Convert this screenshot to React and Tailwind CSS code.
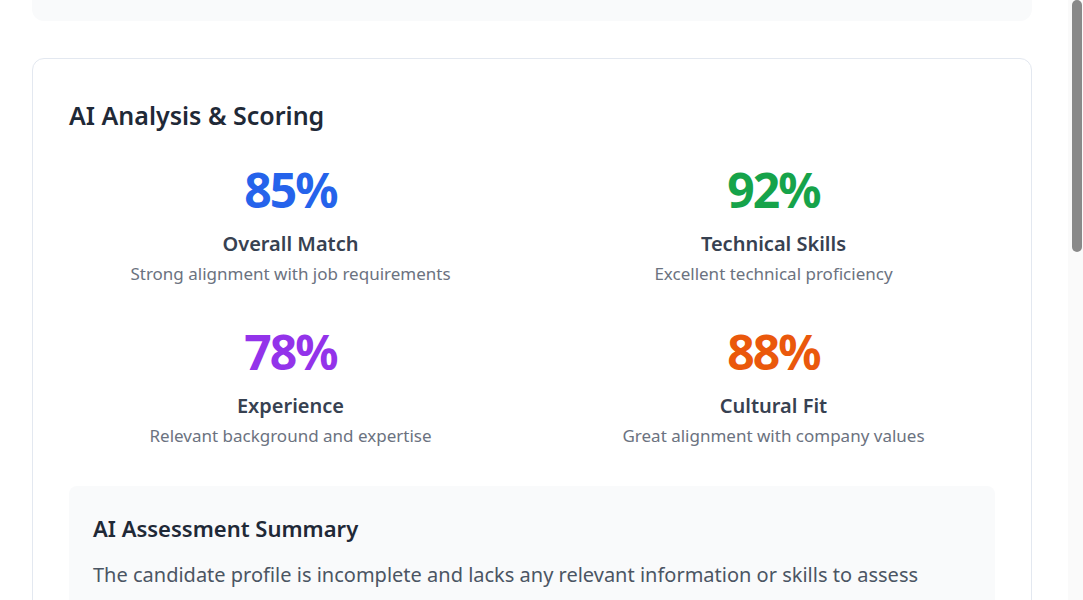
import React from 'react';

const scores = [
  { value: '85%', label: 'Overall Match', desc: 'Strong alignment with job requirements', color: 'text-[#2563eb]' },
  { value: '92%', label: 'Technical Skills', desc: 'Excellent technical proficiency', color: 'text-[#16a34a]' },
  { value: '78%', label: 'Experience', desc: 'Relevant background and expertise', color: 'text-[#9333ea]' },
  { value: '88%', label: 'Cultural Fit', desc: 'Great alignment with company values', color: 'text-[#ea580c]' },
];

const ScoreItem = ({ s }) => (
  <div className="text-center">
    <div className={`text-5xl font-bold leading-none tracking-[-0.04em] ${s.color}`}>{s.value}</div>
    <div className="mt-4 text-xl font-semibold text-[#374151]">{s.label}</div>
    <div className="mt-1 text-[17px] leading-6 text-[#6b7280]">{s.desc}</div>
  </div>
);

export default function App() {
  return (
    <div className="flex h-[600px] overflow-hidden bg-white" style={{ fontFamily: '"Noto Sans", "Open Sans", sans-serif' }}>
      <div className="flex-1 overflow-hidden pl-8">
        <div className="h-[21px] w-[1000px] rounded-b-xl bg-[#f9fafb]" />

        <div className="mt-[37px] w-[1000px] rounded-xl border border-[#e3e8f0] px-9 pt-[40px]">
          <h2 className="text-[25px] leading-8 font-semibold text-[#1f2937]">AI Analysis &amp; Scoring</h2>

          <div className="mt-[35px] grid grid-cols-2 gap-x-10 gap-y-[42px]">
            {scores.map(s => <ScoreItem key={s.label} s={s} />)}
          </div>

          <div className="mt-[38px] rounded-lg bg-[#f9fafb] px-6 pt-[28px] pb-6">
            <h3 className="text-[22px] leading-7 font-semibold text-[#1f2937]">AI Assessment Summary</h3>
            <p className="mt-[15px] max-w-[860px] text-xl leading-9 text-[#4b5563]">
              The candidate profile is incomplete and lacks any relevant information or skills to assess
              their suitability for the role.
            </p>
          </div>
        </div>
      </div>

      {/* page scrollbar */}
      <div className="w-[15px] bg-[#fafafa] pl-[4px] pr-[1px]">
        <div className="h-[252px] w-[10px] rounded-full bg-[#898989]" />
      </div>
    </div>
  );
}
